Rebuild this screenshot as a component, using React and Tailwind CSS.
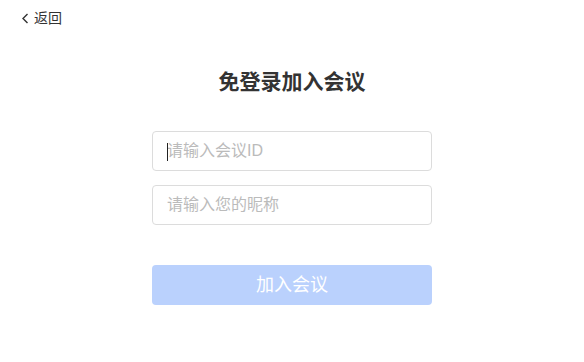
export default function App() {
  return (
    <div
      className="w-[584px] h-[362px] bg-white text-[#333] relative"
      style={{ fontFamily: '"Liberation Sans", "Noto Sans CJK SC", sans-serif' }}
    >
      {/* Back */}
      <div className="flex items-center gap-[5px] pl-[21px] pt-[10px] text-[14px] leading-[16px]">
        <svg width="8" height="11" viewBox="0 0 8 11" fill="none">
          <path d="M6.5 1L2 5.5L6.5 10" stroke="#333" strokeWidth="1.4" />
        </svg>
        <span>返回</span>
      </div>

      <div className="flex flex-col items-center">
        <h1 className="mt-[43px] text-[21px] leading-[26px] font-bold text-[#333]">免登录加入会议</h1>

        <div className="mt-[36px] w-[280px] flex flex-col gap-[14px]">
          <div className="relative h-[40px] border border-[#dcdcdc] rounded-[4px] flex items-center px-[14px] text-[16px] text-[#bbb]">
            <span className="absolute left-[14px] top-[11px] w-[1px] h-[18px] bg-[#222]" />
            请输入会议ID
          </div>
          <div className="h-[40px] border border-[#dcdcdc] rounded-[4px] flex items-center px-[14px] text-[16px] text-[#bbb]">
            请输入您的昵称
          </div>
        </div>

        <button className="mt-[40px] w-[280px] h-[40px] rounded-[4px] bg-[#bad1fd] text-white text-[18px]">
          加入会议
        </button>
      </div>
    </div>
  );
}
